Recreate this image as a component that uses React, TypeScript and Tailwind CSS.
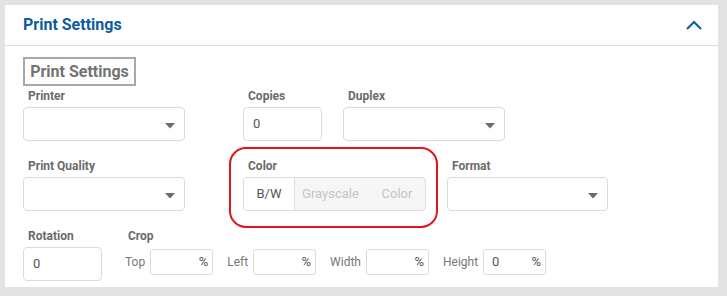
import React from "react";

function Caret() {
  return (
    <svg width="10" height="6" viewBox="0 0 10 6" className="absolute right-[9px] top-[15px]">
      <path d="M0 0 H10 L5 5.5 Z" fill="#6b6b6b" />
    </svg>
  );
}

function Label({ children }: { children: React.ReactNode }) {
  return (
    <div className="pl-[5px] text-[12px] font-bold leading-[14px] text-[#6b6b6b]">{children}</div>
  );
}

function Select() {
  return (
    <div className="relative mt-[4px] h-[34px] rounded-[4px] border border-[#dcdcdc] bg-white">
      <Caret />
    </div>
  );
}

function TextInput({ value }: { value: string }) {
  return (
    <div className="mt-[4px] flex h-[34px] items-center rounded-[4px] border border-[#dcdcdc] bg-white pl-[9px] text-[13px] text-[#555]">
      {value}
    </div>
  );
}

function CropInput({ label, value }: { label: string; value?: string }) {
  return (
    <div className="flex items-center">
      <span className="text-[12px] text-[#777]">{label}</span>
      <div className="ml-[5px] flex h-[26px] w-[63px] items-center justify-between rounded-[3px] border border-[#dcdcdc] pl-[8px] pr-[4px] text-[13px] text-[#555]">
        <span>{value ?? ""}</span>
        <span>%</span>
      </div>
    </div>
  );
}

export default function App() {
  return (
    <div className="h-[296px] w-[727px] bg-[#e3e3e3] pl-[5px] pt-[5px] font-['Roboto',sans-serif]">
      <div className="h-[282px] w-[713px] bg-white">
        <div className="flex h-[41px] items-center justify-between border-b border-[#dddddd] pl-[18px] pr-[16px]">
          <span className="text-[16px] font-bold text-[#0d5c9b]">Print Settings</span>
          <svg width="16" height="10" viewBox="0 0 16 10" className="mb-[1px]">
            <path d="M1 9 L8 2 L15 9" stroke="#0c63a7" strokeWidth="2.2" fill="none" />
          </svg>
        </div>
        <div className="pl-[18px] pt-[11px]">
          <div className="flex h-[29px] w-[113px] items-center justify-center border-2 border-[#a8a8a8] text-[16px] font-bold text-[#737373]">
            Print Settings
          </div>
          {/* Row 1 */}
          <div className="mt-[3px] flex items-start">
            <div className="w-[162px]">
              <Label>Printer</Label>
              <Select />
            </div>
            <div className="ml-[58px] w-[79px]">
              <Label>Copies</Label>
              <TextInput value="0" />
            </div>
            <div className="ml-[21px] w-[162px]">
              <Label>Duplex</Label>
              <Select />
            </div>
          </div>
          {/* Row 2 */}
          <div className="mt-[18px] flex items-start">
            <div className="w-[162px]">
              <Label>Print Quality</Label>
              <Select />
            </div>
            <div className="relative ml-[58px] w-[183px]">
              <div className="pointer-events-none absolute left-[-14px] right-[-12px] top-[-12px] bottom-[-17px] rounded-[17px] border-[2.5px] border-[#e3141c]" />
              <Label>Color</Label>
              <div className="mt-[4px] flex h-[34px] overflow-hidden rounded-[4px] border border-[#dcdcdc] bg-[#f6f6f6] text-[13px]">
                <div className="flex w-[51px] items-center justify-center border-r border-[#dcdcdc] bg-white text-[#555]">
                  B/W
                </div>
                <div className="flex flex-1 items-center justify-center pr-[3px] text-[#c4c4c4]">Grayscale</div>
                <div className="flex w-[56px] items-center justify-center text-[#c4c4c4]">Color</div>
              </div>
            </div>
            <div className="ml-[21px] w-[161px]">
              <Label>Format</Label>
              <Select />
            </div>
          </div>
          {/* Row 3 */}
          <div className="mt-[18px] flex items-start">
            <div className="w-[79px]">
              <Label>Rotation</Label>
              <TextInput value="0" />
            </div>
            <div className="ml-[21px]">
              <Label>Crop</Label>
              <div className="mt-[6px] flex items-center gap-[14px] pl-[2px]">
                <CropInput label="Top" />
                <CropInput label="Left" />
                <CropInput label="Width" />
                <CropInput label="Height" value="0" />
              </div>
            </div>
          </div>
        </div>
      </div>
    </div>
  );
}
